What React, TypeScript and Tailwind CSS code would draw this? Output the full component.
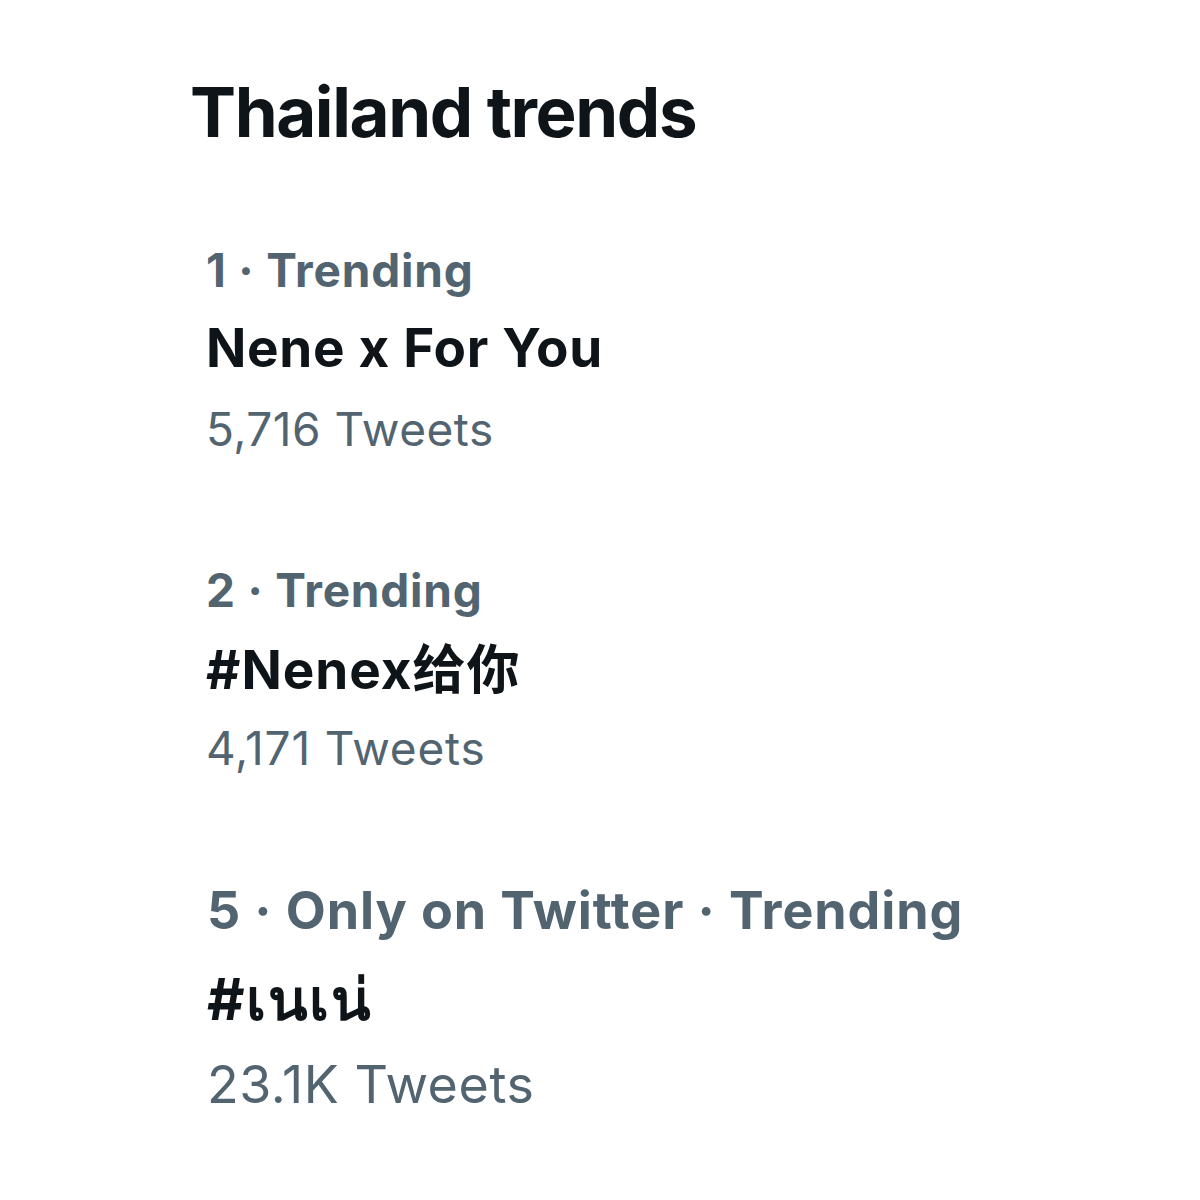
const FONT = "font-['Inter','Noto_Sans_CJK_SC','Noto_Sans',sans-serif]";

type Trend = {
  meta: string;
  title: string;
  count: string;
};

const trends: Trend[] = [
  { meta: "1 · Trending", title: "Nene x For You", count: "5,716 Tweets" },
  { meta: "2 · Trending", title: "#Nenex给你", count: "4,171 Tweets" },
  { meta: "5 · Only on Twitter · Trending", title: "#เนเน่", count: "23.1K Tweets" },
];

export default function App() {
  return (
    <div className={`w-[1200px] h-[1200px] bg-white ${FONT} pl-[190px] pt-[78px]`}>
      <h2 className="h-[69px] text-[69px] leading-[69px] font-bold tracking-[-1.4px] text-[#0f1419]">
        Thailand trends
      </h2>

      {/* trend 1 */}
      <div className="mt-[100px] pl-[16px] flex flex-col">
        <div className="h-[46px] text-[46px] leading-[46px] font-bold tracking-[0.8px] text-[#536471]">
          {trends[0].meta}
        </div>
        <div className="mt-[29px] h-[53px] text-[53px] leading-[53px] font-bold tracking-[0.7px] text-[#0f1419]">
          {trends[0].title}
        </div>
        <div className="mt-[31px] h-[46px] text-[46px] leading-[46px] tracking-[0.5px] text-[#536471]">
          {trends[0].count}
        </div>
      </div>

      {/* trend 2 */}
      <div className="mt-[115px] pl-[16px] flex flex-col">
        <div className="h-[46px] text-[46px] leading-[46px] font-bold tracking-[0.8px] text-[#536471]">
          {trends[1].meta}
        </div>
        <div className="mt-[31px] h-[53px] text-[53px] leading-[53px] font-bold tracking-[1px] text-[#0f1419]">
          {trends[1].title}
        </div>
        <div className="mt-[28px] h-[46px] text-[46px] leading-[46px] tracking-[0.8px] text-[#536471]">
          {trends[1].count}
        </div>
      </div>

      {/* trend 5 */}
      <div className="mt-[114px] pl-[17px] flex flex-col">
        <div className="h-[52px] text-[52px] leading-[52px] font-bold tracking-[0.9px] text-[#536471]">
          {trends[2].meta}
        </div>
        <div className="mt-[33px] h-[58px] text-[58px] leading-[58px] font-bold tracking-[1.5px] text-[#0f1419]">
          {trends[2].title}
        </div>
        <div className="mt-[31px] h-[52px] text-[52px] leading-[52px] tracking-[0.6px] text-[#536471]">
          {trends[2].count}
        </div>
      </div>
    </div>
  );
}
